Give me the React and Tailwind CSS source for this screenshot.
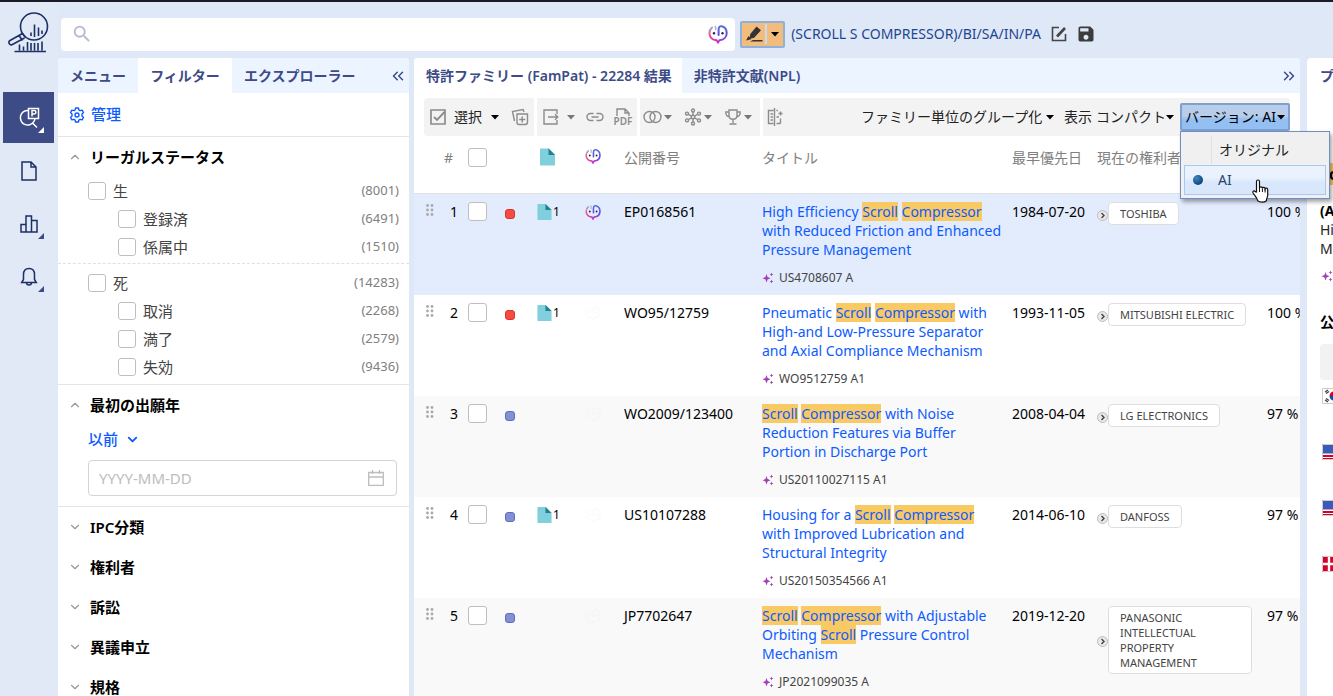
/* eslint-disable react/prop-types */
import { useState } from "react";
import {
  LuChevronDown,
  LuChevronUp,
  LuChevronsLeft,
  LuChevronsRight,
} from "react-icons/lu";
import { MdSave, MdSearch } from "react-icons/md";

const FILTER_GROUPS = [
  {
    label: "生",
    count: 8001,
    children: [
      { label: "登録済", count: 6491 },
      { label: "係属中", count: 1510 },
    ],
  },
  {
    label: "死",
    count: 14283,
    children: [
      { label: "取消", count: 2268 },
      { label: "満了", count: 2579 },
      { label: "失効", count: 9436 },
    ],
  },
];

const CLOSED_SECTIONS = ["IPC分類", "権利者", "訴訟", "異議申立", "規格"];

const ROWS = [
  {
    number: "EP0168561",
    title: "High Efficiency Scroll Compressor with Reduced Friction and Enhanced Pressure Management",
    source: "US4708607 A",
    date: "1984-07-20",
    owner: "TOSHIBA",
    score: 100,
    dead: true,
    doc: true,
    ai: true,
  },
  {
    number: "WO95/12759",
    title: "Pneumatic Scroll Compressor with High-and Low-Pressure Separator and Axial Compliance Mechanism",
    source: "WO9512759 A1",
    date: "1993-11-05",
    owner: "MITSUBISHI ELECTRIC",
    score: 100,
    dead: true,
    doc: true,
  },
  {
    number: "WO2009/123400",
    title: "Scroll Compressor with Noise Reduction Features via Buffer Portion in Discharge Port",
    source: "US20110027115 A1",
    date: "2008-04-04",
    owner: "LG ELECTRONICS",
    score: 97,
  },
  {
    number: "US10107288",
    title: "Housing for a Scroll Compressor with Improved Lubrication and Structural Integrity",
    source: "US20150354566 A1",
    date: "2014-06-10",
    owner: "DANFOSS",
    score: 97,
    doc: true,
  },
  {
    number: "JP7702647",
    title: "Scroll Compressor with Adjustable Orbiting Scroll Pressure Control Mechanism",
    source: "JP2021099035 A",
    date: "2019-12-20",
    owner: "PANASONIC INTELLECTUAL PROPERTY MANAGEMENT",
    score: 97,
  },
];

/* ---------- icons ---------- */

const Gradients = () => (
  <svg className="absolute h-0 w-0" aria-hidden="true">
    <defs>
      <linearGradient id="ai-left" x1="0" y1="0" x2="0.6" y2="1">
        <stop offset="0" stopColor="#8fc6dd" />
        <stop offset="0.35" stopColor="#f2557f" />
        <stop offset="1" stopColor="#d92bb4" />
      </linearGradient>
      <linearGradient id="ai-right" x1="0" y1="0" x2="0" y2="1">
        <stop offset="0" stopColor="#5b6fd8" />
        <stop offset="0.6" stopColor="#5a4de6" />
        <stop offset="1" stopColor="#c43ad0" />
      </linearGradient>
      <linearGradient id="sparkle" x1="0" y1="0" x2="1" y2="0">
        <stop offset="0" stopColor="#e0358a" />
        <stop offset="1" stopColor="#5b54e0" />
      </linearGradient>
      <radialGradient id="radio" cx="0.35" cy="0.3" r="0.8">
        <stop offset="0" stopColor="#3f86c0" />
        <stop offset="1" stopColor="#083a72" />
      </radialGradient>
    </defs>
  </svg>
);

const AiIcon = ({ className }) => (
  <svg viewBox="0 0 20 20" fill="none" strokeWidth="2" strokeLinecap="round" className={className}>
    <path d="M4 3.500C2 5.200 1.200 7.500 1.500 10c.5 3.800 3.500 6 7 6.300l1.500 2.200" stroke="url(#ai-left)" />
    <path d="M10.600 11V5.500c0-2.600 1.500-3.700 3.200-3.200 3 .9 4.900 3.600 4.900 6.700 0 4.300-3.200 6.900-7.200 7.300L10 18.500" stroke="url(#ai-right)" />
    <path d="M7.300 2.300c.5 1 .4 2 .4 3.200" stroke="#9db6dc" strokeWidth="1.500" />
    <circle cx="6" cy="9.300" r="1.200" fill="#26264f" />
    <circle cx="14.500" cy="9.300" r="1.200" fill="#26264f" />
  </svg>
);

const Logo = () => (
  <svg viewBox="0 0 42 42" fill="none" stroke="#1c2f66" strokeWidth="1.600" className="h-[42px] w-[42px]">
    <circle cx="26" cy="14.500" r="13.500" />
    <path d="M14.500 21.500 2 28.500c-2 1.200-1.200 5 2 4.200L16.500 26M11 23.500l3.500 5M14.500 21.500l3 4" />
    <path d="M23 24V20.500M26.500 25V12.500M30.500 24V15.500M34 22V18.500" />
    <path d="M11.500 38.500V32.500M15.500 38.500V34.500M19.500 38.500V30M23 38.500V31M26.500 38.500V31M30 38.500V31M34 38.500V29.500M6.500 39.500H38" />
  </svg>
);

const PatentSearchIcon = () => (
  <svg viewBox="0 0 24 24" fill="none" stroke="#fff" strokeWidth="1.500" className="h-6 w-6">
    <path d="M11.500 4.500a7.300 7.300 0 1 0 5.300 11.200c.6-1 .9-1.700 1-2.700M15.500 17l4.500 4.500" />
    <path d="M11.500 2.500h10v10h-10z" />
    <path d="M15 10.500v-6h2.200a1.600 1.600 0 0 1 0 3.400H15" />
  </svg>
);

const FileIcon = () => (
  <svg viewBox="0 0 20 20" fill="none" stroke="#1c2f66" strokeWidth="1.500" className="h-5 w-5">
    <path d="M3 1h9l5 5v13H3zM12 1v5h5" />
  </svg>
);

const ChartIcon = () => (
  <svg viewBox="0 0 20 20" fill="none" stroke="#1c2f66" strokeWidth="1.500" className="h-5 w-5">
    <path d="M2 10.500h5V18H2zM7 2h5.500v16H7zM12.500 6.500H18V18h-5.500z" />
  </svg>
);

const BellIcon = () => (
  <svg viewBox="0 0 20 20" fill="none" stroke="#1c2f66" strokeWidth="1.500" className="h-5 w-5">
    <path d="M4.500 12.500V7.500C4.500 3.500 7 1.500 10 1.500s5.500 2 5.500 6v5l1.800 3H2.700zM7.500 16c.3 2.700 4.700 2.700 5 0" />
  </svg>
);

const GearIcon = () => (
  <svg viewBox="0 0 16 16" fill="none" stroke="#0d5bff" strokeWidth="1.400" strokeLinejoin="round" className="h-4 w-4">
    <path d="M6.600 1h2.800l.5 2 1.200.7 2-.6 1.400 2.400L13 7v2l1.500 1.500-1.400 2.400-2-.6-1.200.7-.5 2H6.600l-.5-2-1.200-.7-2 .6-1.400-2.400L3 9V7L1.500 5.500l1.400-2.400 2 .6L6.100 3z" />
    <circle cx="8" cy="8" r="2" />
  </svg>
);

const Caret = ({ className }) => (
  <svg viewBox="0 0 8 5" className={`h-[5px] w-2 ${className}`}>
    <path d="M0 0h8L4 4.500z" fill="currentColor" />
  </svg>
);

const ToolIcon = ({ children, className = "w-[18px]" }) => (
  <svg viewBox="0 0 18 18" fill="none" stroke="#8c8c8c" strokeWidth="1.400" className={`h-[18px] shrink-0 ${className}`}>
    {children}
  </svg>
);

const DocIcon = ({ className }) => (
  <svg viewBox="0 0 15 17" className={className}>
    <path d="M0 0h9l6 6v11H0z" fill="#80cfdc" />
    <path d="M8.500 0 15 6.500H8.500z" fill="#23808f" />
  </svg>
);

const Sparkle = () => (
  <svg viewBox="0 0 12 12" fill="url(#sparkle)" className="h-3 w-3 shrink-0">
    <path d="M4.500 2 5.600 5 8.500 6.200 5.600 7.400 4.500 10.400 3.400 7.400.5 6.200 3.400 5z" />
    <path d="m9.500.6.6 1.500 1.400.5-1.400.5-.6 1.500-.6-1.500-1.400-.5 1.400-.5zM9.500 7.600l.6 1.500 1.400.5-1.400.5-.6 1.500-.6-1.500-1.400-.5 1.400-.5z" />
  </svg>
);

const DragHandle = () => (
  <svg viewBox="0 0 8 12" fill="#a9a9a9" className="mt-[2px] h-3 w-2">
    {[1.5, 6, 10.5].map((y) => (
      <g key={y}>
        <circle cx="1.500" cy={y} r="1.400" />
        <circle cx="6" cy={y} r="1.400" />
      </g>
    ))}
  </svg>
);

const HandCursor = () => (
  <svg viewBox="0 0 18 24" className="pointer-events-none absolute top-[47px] left-[70px] h-6 w-[18px]">
    <path
      d="M5.500 13V2.500c0-2 3-2 3 0V9c.3-1.600 2.700-1.500 2.900.2.4-1.300 2.500-1.100 2.700.5.500-1.100 2.600-.8 2.600 1v5.500c0 2-1.300 3-1.300 5.500-2 1.800-6.500 1.800-8.700 0-.2-2.300-2.800-4.700-4.600-7.700-1-1.900 1.200-2.900 2.200-1.300z"
      fill="#fff"
      stroke="#111"
      strokeWidth="1.200"
    />
    <path d="M8.500 9v4M11.400 9.500V13M14.100 10v3.500" stroke="#111" />
  </svg>
);

/* ---------- layout pieces ---------- */

const CheckBox = ({ label, id, className = "h-[18px] w-[18px]" }) => (
  <input
    type="checkbox"
    id={id}
    aria-label={label}
    className={`block shrink-0 appearance-none rounded-[3px] border border-[#bfbfbf] bg-white ${className}`}
  />
);

const Corner = ({ light }) => (
  <svg viewBox="0 0 6 6" className="absolute right-[10px] bottom-[10px] h-[6px] w-[6px]">
    <path d="M6 0v6H0z" fill={light ? "#fff" : "#3d4b87"} />
  </svg>
);

const NavButton = ({ label, active, menu, children }) => (
  <button
    aria-label={label}
    className={`relative flex h-[51px] w-[51px] items-center justify-center ${active ? "bg-[#3d4b87]" : ""}`}
  >
    {children}
    {menu && <Corner light={active} />}
  </button>
);

const SideNav = () => (
  <nav className="flex w-[58px] shrink-0 flex-col items-start bg-[#e1e8f6] pl-[3px]">
    <a href="#home" aria-label="ホーム" className="mt-[10px] ml-[5px] block">
      <Logo />
    </a>
    <div className="mt-[38px] flex flex-col gap-[2px]">
      <NavButton label="検索" active menu>
        <PatentSearchIcon />
      </NavButton>
      <NavButton label="文書">
        <FileIcon />
      </NavButton>
      <NavButton label="分析" menu>
        <ChartIcon />
      </NavButton>
      <NavButton label="アラート" menu>
        <BellIcon />
      </NavButton>
    </div>
  </nav>
);

const TopBar = () => (
  <header className="flex h-14 items-center pl-[3px] text-sm">
    <div className="mt-2 flex h-[33px] w-[53%] items-center rounded-[4px] bg-white pr-[7px] pl-[10px]">
      <MdSearch className="h-[22px] w-[22px] text-[#b4bacb]" />
      <input type="text" aria-label="検索" className="min-w-0 flex-1 px-2 outline-none" />
      <AiIcon className="h-5 w-5" />
    </div>
    <div className="mt-2 ml-[5px] flex items-center">
      <button
        aria-label="ハイライト"
        className="flex h-[27px] w-[45px] items-center rounded-[2px] border-2 border-[#8fb0d8] bg-[#f2bd7c]"
      >
        <svg viewBox="0 0 18 18" fill="#333" className="ml-[3px] h-[18px] w-[18px]">
          <path d="M11.500 1.500 16 5.300l-6.800 7.500-4.800 1.200L5.300 9zM3.500 11l2.600 3.200L1 15.500zM8 15h9.500v1.500H5z" />
        </svg>
        <span className="ml-[2px] h-5 w-[2px] bg-[#c7dbf2]" />
        <Caret className="ml-1 text-black" />
      </button>
      <span className="ml-[6px] text-[#1f4591]">(SCROLL S COMPRESSOR)/BI/SA/IN/PA</span>
      <button aria-label="編集" className="ml-[10px]">
        <svg viewBox="0 0 16 16" fill="none" stroke="#444" strokeWidth="1.600" className="h-4 w-4">
          <path d="M8 1.500H1.500v13h13V8" />
          <path d="M6 10.500 14 2" strokeWidth="2.600" />
        </svg>
      </button>
      <button aria-label="保存" className="ml-[9px]">
        <MdSave className="h-5 w-5 text-[#3c3c3c]" />
      </button>
    </div>
  </header>
);

const FilterItem = ({ id, label, count, child }) => (
  <li className={`flex h-7 items-center pr-[10px] ${child ? "pl-[60px]" : "pl-[30px]"}`}>
    <CheckBox id={id} />
    <label htmlFor={id} className="flex-1 pl-[7px] text-[15px] text-[#444]">
      {label}
    </label>
    <span className="text-[13px] text-[#808080]">({count})</span>
  </li>
);

const SectionHeader = ({ title, open }) => (
  <button className="flex h-10 w-full shrink-0 items-center gap-2 pl-[10px] text-[15px] font-semibold text-black">
    {open ? (
      <LuChevronUp className="h-[14px] w-[14px] text-[#999]" />
    ) : (
      <LuChevronDown className="h-[14px] w-[14px] text-[#999]" />
    )}
    {title}
  </button>
);

const FilterPanel = () => (
  <aside className="flex w-[351px] shrink-0 flex-col overflow-hidden rounded-t-[4px] bg-white">
    <div className="flex h-[35px] shrink-0 items-stretch bg-[#ecf4ff] text-sm font-semibold text-[#3d4b87]">
      <button className="w-20">メニュー</button>
      <button className="w-[94px] bg-white">フィルター</button>
      <button className="pl-3">エクスプローラー</button>
      <button aria-label="折りたたむ" className="mr-[2px] ml-auto">
        <LuChevronsLeft className="h-[18px] w-[18px]" />
      </button>
    </div>
    <div className="flex h-11 shrink-0 items-center border-b border-[#e4e4e4]">
      <button className="flex items-center gap-[6px] pl-[11px] text-[15px] font-medium text-[#0d5bff]">
        <GearIcon />
        管理
      </button>
    </div>
    <section className="shrink-0 border-b border-[#e4e4e4] pb-[3px]">
      <SectionHeader title="リーガルステータス" open />
      {FILTER_GROUPS.map((group, index) => (
        <ul
          key={group.label}
          className={index === 0 ? "border-b border-dashed border-[#e0e0e0] pb-[2px]" : "pt-[5px]"}
        >
          <FilterItem id={`f-${index}`} label={group.label} count={group.count} />
          {group.children.map((item, i) => (
            <FilterItem key={item.label} id={`f-${index}-${i}`} label={item.label} count={item.count} child />
          ))}
        </ul>
      ))}
    </section>
    <section className="shrink-0 border-b border-[#e4e4e4] pb-[10px]">
      <SectionHeader title="最初の出願年" open />
      <div className="flex h-7 items-center pl-[30px] text-[15px] font-medium text-[#0d5bff]">
        <select aria-label="期間" className="appearance-none bg-transparent outline-none">
          <option>以前</option>
        </select>
        <LuChevronDown className="ml-[6px] h-[15px] w-[15px]" strokeWidth="3" />
      </div>
      <div className="mt-[7px] mr-3 ml-[30px] flex h-9 items-center rounded-[4px] border border-[#d4d4d4] pr-3 pl-[10px]">
        <input
          type="text"
          aria-label="日付"
          placeholder="YYYY-MM-DD"
          className="min-w-0 flex-1 text-[15px] outline-none placeholder:text-[#bdbdbd]"
        />
        <svg viewBox="0 0 16 16" fill="none" stroke="#bdbdbd" strokeWidth="1.300" className="h-4 w-4">
          <path d="M.7 2.500h14.600v12.800H.7zM.7 7h14.600M4.500 0v4M11.500 0v4" />
        </svg>
      </div>
    </section>
    {CLOSED_SECTIONS.map((title) => (
      <SectionHeader key={title} title={title} />
    ))}
  </aside>
);

const VersionMenu = ({ version, onChange }) => (
  <div
    role="menu"
    className="absolute top-full left-0 z-20 flex w-[150px] flex-col border border-[#6f8fc2] bg-[#f0f0f0] p-[3px] text-sm shadow-[2px_3px_4px_rgba(0,0,0,0.35)]"
  >
    {["オリジナル", "AI"].map((name) => (
      <button
        key={name}
        role="menuitemradio"
        aria-checked={version === name}
        onClick={() => onChange(name)}
        className={`flex h-[30px] items-center border text-left ${
          version === name
            ? "border-[#a9c9f2] bg-linear-to-b from-[#e9f2fd] from-40% to-[#d8e7fb] to-60% text-[#274472]"
            : "border-transparent text-[#222]"
        }`}
      >
        <span className="flex w-[26px] justify-center">
          {version === name && (
            <svg viewBox="0 0 10 10" className="h-[10px] w-[10px]">
              <circle cx="5" cy="5" r="5" fill="url(#radio)" />
            </svg>
          )}
        </span>
        <span className={`flex h-full items-center pl-[7px] ${version === name ? "" : "border-l border-[#e0e0e0]"}`}>
          {name}
        </span>
      </button>
    ))}
    <HandCursor />
  </div>
);

const Toolbar = () => {
  const [version, setVersion] = useState("AI");

  return (
    <div className="mx-[10px] mt-[5px] flex h-[38px] shrink-0 gap-[3px] text-sm text-[#222] *:bg-[#f3f3f3]">
      <div className="flex w-[110px] items-center rounded-l-[4px] pl-[5px]">
        <button className="flex items-center">
          <ToolIcon>
            <path d="M2 2h14v14H2z" strokeWidth="1.700" />
            <path d="m5 9 3 3 7.500-8" strokeWidth="1.900" />
          </ToolIcon>
          <span className="ml-[7px]">選択</span>
          <Caret className="ml-[9px] text-black" />
        </button>
        <button aria-label="リストに追加" className="ml-3">
          <ToolIcon>
            <path d="M6 6h10.500v8a2.500 2.500 0 0 1-2.500 2.500H8A2 2 0 0 1 6 14.500zM3.500 13 1.500 3.500 12 1.500l1 2.500M11.200 8.500v6M8.200 11.500h6" />
          </ToolIcon>
        </button>
      </div>
      <div className="flex w-[100px] items-center pl-[5px] text-[#777]">
        <button aria-label="エクスポート" className="flex items-center">
          <ToolIcon>
            <path d="M15 6V2H2v14h13v-4M6 9h9.500M13 6.200 15.800 9 13 11.800" />
          </ToolIcon>
          <Caret className="ml-[7px]" />
        </button>
        <button aria-label="リンク" className="ml-[11px]">
          <ToolIcon>
            <path d="M7.500 5.500H4.500a3.500 3.500 0 0 0 0 7h3M10.500 5.500h3a3.500 3.500 0 0 1 0 7h-3M5.500 9h7" />
          </ToolIcon>
        </button>
        <button className="ml-[9px] flex w-5 flex-col items-center">
          <svg viewBox="0 0 14 8" fill="none" stroke="#8c8c8c" strokeWidth="1.400" className="h-2 w-[14px]">
            <path d="M1 8V1h8l4 4v3M9 1v4h4" />
          </svg>
          <span className="text-[10px] leading-[10px] font-semibold text-[#8c8c8c]">PDF</span>
        </button>
      </div>
      <div className="flex w-[120px] items-center gap-[12px] pl-[3px] text-[#777]">
        <button aria-label="比較" className="flex items-center">
          <svg viewBox="0 0 19 14" fill="none" stroke="#8c8c8c" strokeWidth="1.400" className="h-[14px] w-[19px]">
            <circle cx="6.500" cy="7" r="5.500" />
            <circle cx="12.500" cy="7" r="5.500" />
          </svg>
          <Caret className="ml-[2px]" />
        </button>
        <button aria-label="クラスター" className="flex items-center">
          <ToolIcon>
            <circle cx="9" cy="9" r="1.800" />
            <path d="M9 7.200V4M9 10.800V14M7.400 8 4.300 6.300M10.600 8l3.100-1.700M7.400 10l-3.100 1.700M10.600 10l3.100 1.700" />
            <circle cx="9" cy="2.500" r="1.500" />
            <circle cx="9" cy="15.500" r="1.500" />
            <circle cx="3" cy="5.600" r="1.500" />
            <circle cx="15" cy="5.600" r="1.500" />
            <circle cx="3" cy="12.400" r="1.500" />
            <circle cx="15" cy="12.400" r="1.500" />
          </ToolIcon>
          <Caret className="ml-[2px]" />
        </button>
        <button aria-label="ランキング" className="flex items-center">
          <ToolIcon>
            <path d="M5 2h8v5.500c0 5-8 5-8 0zM5 4H1.800c0 3 1.200 4.500 3.500 4.700M13 4h3.200c0 3-1.200 4.500-3.500 4.700M9 11.200V15M5.500 16h7" />
          </ToolIcon>
          <Caret className="ml-[2px]" />
        </button>
      </div>
      <div className="flex flex-1 items-center rounded-r-[4px] pl-[3px] whitespace-nowrap">
        <button aria-label="並べて表示">
          <ToolIcon>
            <path d="M8.500 0v18M7.500 2.500h-5v13h5M4.500 6H7M4.500 9H7M4.500 12H7" />
            <path d="M10.500 2.500H12M14.500 3.500v4M12.500 5.500h4M10.500 9H13M14.500 10.500v5M10.500 15.500h4" />
          </ToolIcon>
        </button>
        <div className="ml-auto flex items-center">
          <select aria-label="グループ化" className="appearance-none bg-transparent outline-none">
            <option>ファミリー単位のグループ化</option>
          </select>
          <Caret className="ml-[3px] text-black" />
        </div>
        <label htmlFor="display" className="ml-[10px]">
          表示
        </label>
        <div className="ml-1 flex items-center">
          <select id="display" className="appearance-none bg-transparent outline-none">
            <option>コンパクト</option>
          </select>
          <Caret className="text-black" />
        </div>
        <div className="relative ml-[6px]">
          <button
            aria-haspopup="menu"
            aria-expanded="true"
            className="flex h-7 w-[110px] items-center justify-center rounded-[2px] border-2 border-[#7f9fce] bg-linear-to-b from-[#b7cdea] from-45% to-[#93bff3] to-60% text-black"
          >
            バージョン: {version}
            <Caret className="ml-px" />
          </button>
          <VersionMenu version={version} onChange={setVersion} />
        </div>
      </div>
    </div>
  );
};

const Title = ({ text }) => (
  <a href="#detail" className="block text-[#0d5bff]">
    {text.split(/(Scroll|Compressor)/).map((part, i) =>
      i % 2 ? (
        <mark key={i} className="bg-[#f9c963] text-inherit">
          {part}
        </mark>
      ) : (
        part
      )
    )}
  </a>
);

const ResultRow = ({ row, index }) => (
  <tr
    className={`h-[101px] align-top text-black *:pt-2 ${
      index === 0 ? "bg-[#e3ecfd]" : index % 2 ? "bg-white" : "bg-[#f9f9f9]"
    }`}
  >
    <td className="pl-3">
      <DragHandle />
    </td>
    <td className="pr-[10px] text-right">{index + 1}</td>
    <td>
      <CheckBox label={`${row.number} を選択`} className="h-[19px] w-[19px]" />
    </td>
    <td>
      <div
        className={`mt-[7px] ml-[9px] h-[10px] w-[10px] rounded-[3px] border ${
          row.dead ? "border-[#d8362c] bg-[#f54b40]" : "border-[#5f6fc0] bg-[#8490d6]"
        }`}
      />
    </td>
    <td>
      {row.doc && (
        <div className="flex items-center gap-px pl-[5px] text-xs leading-5">
          <DocIcon className="h-4 w-[15px]" />1
        </div>
      )}
    </td>
    <td>
      <AiIcon className={`mt-[2px] ml-[9px] h-4 w-4 ${row.ai ? "" : "opacity-[0.02]"}`} />
    </td>
    <td className="pl-2">{row.number}</td>
    <td className="pl-2">
      <Title text={row.title} />
      <div className="flex items-center gap-[5px] pt-[10px] pb-2 text-[12px] leading-[18px] text-[#444]">
        <Sparkle />
        {row.source}
      </div>
    </td>
    <td className="pl-2 whitespace-nowrap">{row.date}</td>
    <td className="pl-2">
      <div className="flex items-center">
        <svg viewBox="0 0 11 11" className="mt-1 h-[11px] w-[11px] shrink-0">
          <circle cx="5.500" cy="5.500" r="5" fill="#e9e9e9" stroke="#bbb" />
          <path d="m4.500 3 2.500 2.500L4.500 8" fill="none" stroke="#444" strokeWidth="1.400" />
        </svg>
        <button className="max-w-[144px] rounded-[4px] border border-[#dedede] bg-white px-[11px] py-[3px] text-left text-[11px] leading-[15px] text-[#444]">
          {row.owner}
        </button>
      </div>
    </td>
    <td className="overflow-hidden pl-2 whitespace-nowrap">{row.score} %</td>
  </tr>
);

const Results = () => (
  <main className="flex min-w-0 flex-1 flex-col rounded-t-[4px] bg-white">
    <div className="flex h-[35px] shrink-0 rounded-t-[4px] bg-[#ecf4ff] text-sm font-semibold text-[#3d4b87]">
      <button className="rounded-tl-[4px] bg-white pr-[10px] pl-3 whitespace-nowrap">特許ファミリー (FamPat) - 22284 結果</button>
      <button className="px-3">非特許文献(NPL)</button>
      <button aria-label="展開" className="mr-[2px] ml-auto">
        <LuChevronsRight className="h-[18px] w-[18px]" />
      </button>
    </div>
    <Toolbar />
    <div className="min-h-0 flex-1 overflow-hidden">
      <table className="w-full table-fixed text-sm leading-[19px]">
        <colgroup>
          <col className="w-7" />
          <col className="w-[26px]" />
          <col className="w-7" />
          <col className="w-9" />
          <col className="w-11" />
          <col className="w-10" />
          <col className="w-[138px]" />
          <col />
          <col className="w-[85px]" />
          <col className="w-[170px]" />
          <col className="w-[41px]" />
        </colgroup>
        <thead>
          <tr className="h-[57px] border-b border-[#e2e2e2] text-left align-top text-[#808080] *:pt-3 *:font-normal *:whitespace-nowrap">
            <th />
            <th className="pl-[2px]">#</th>
            <th>
              <CheckBox label="すべて選択" className="h-[19px] w-[19px]" />
            </th>
            <th />
            <th className="pl-2">
              <DocIcon className="h-[18px] w-[15px]" />
            </th>
            <th className="pl-[9px]">
              <AiIcon className="h-4 w-4" />
            </th>
            <th className="pl-2">公開番号</th>
            <th className="pl-2">タイトル</th>
            <th className="pl-2">最早優先日</th>
            <th className="pl-2">現在の権利者</th>
            <th />
          </tr>
        </thead>
        <tbody>
          {ROWS.map((row, index) => (
            <ResultRow key={row.number} row={row} index={index} />
          ))}
        </tbody>
      </table>
    </div>
  </main>
);

const Flag = ({ country }) => (
  <svg viewBox="0 0 24 16" className="h-4 w-6 shrink-0">
    <path d="M0 0h24v16H0z" fill={country === "dk" ? "#d80027" : "#fff"} />
    {country === "us" && (
      <>
        <path d="M0 11h24v2H0zM0 14h24v1.500H0z" fill="#d80027" />
        <path d="M0 0h13v9.500H0z" fill="#3a5ab8" />
      </>
    )}
    {country === "dk" && <path d="M0 8h24M7 0v16" stroke="#fff" strokeWidth="2.400" />}
    {country === "kr" && (
      <>
        <path d="m3 4 3-2M4 5.500l3-2M3 12l3 2M4 10.500l3 2" stroke="#444" strokeWidth="1.400" />
        <path d="M7.500 8a4.500 4.500 0 0 1 9 0z" fill="#d80027" />
        <path d="M7.500 8a4.500 4.500 0 0 0 9 0z" fill="#0052b4" />
      </>
    )}
    <path d="M.5.500h23v15H.5z" fill="none" stroke="#ccc" />
  </svg>
);

const PreviewPanel = () => (
  <aside className="flex w-[26px] shrink-0 flex-col overflow-hidden rounded-tl-[4px] bg-white pl-[13px] text-sm leading-[19px] whitespace-nowrap text-[#222]">
    <h2 className="py-2 font-semibold text-[#3d4b87]">プレビュー</h2>
    <h3 className="mt-[71px] text-base leading-5 font-bold text-black">
      <mark className="bg-[#f9c963]">Scroll</mark>
    </h3>
    <p className="mt-[17px] font-bold text-black">(A)</p>
    <p>High</p>
    <p>Management</p>
    <div className="mt-3 ml-px">
      <Sparkle />
    </div>
    <h3 className="mt-[30px] font-bold text-black">公報</h3>
    <div className="mt-[13px] h-9 w-40 shrink-0 rounded-[4px] bg-[#f2f2f2]" />
    <div className="mt-2 ml-[2px] flex flex-col gap-10">
      <Flag country="kr" />
      <Flag country="us" />
      <Flag country="us" />
      <Flag country="dk" />
    </div>
  </aside>
);

export default function App() {
  return (
    <div className="flex h-screen overflow-hidden border-t-2 border-[#1b1b26] bg-[#dee8f7] font-['Noto_Sans','Noto_Sans_CJK_JP',sans-serif]">
      <Gradients />
      <SideNav />
      <div className="flex min-w-0 flex-1 flex-col">
        <TopBar />
        <div className="flex min-h-0 flex-1">
          <FilterPanel />
          <div className="w-[5px] shrink-0" />
          <Results />
          <div className="w-[7px] shrink-0" />
          <PreviewPanel />
        </div>
      </div>
    </div>
  );
}
